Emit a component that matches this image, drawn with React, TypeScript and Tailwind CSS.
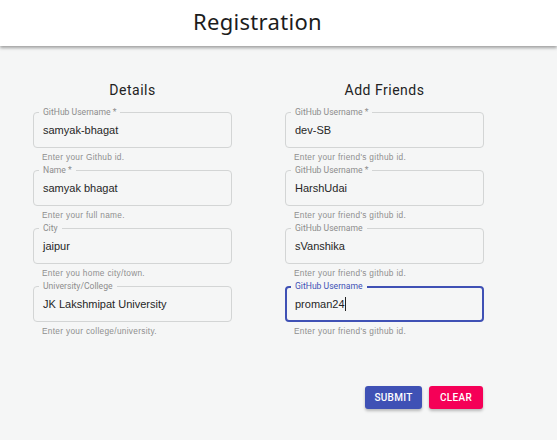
import React from "react";

type Field = {
  label: string;
  value: string;
  helper: string;
  focused?: boolean;
};

const details: Field[] = [
  { label: "GitHub Username *", value: "samyak-bhagat", helper: "Enter your Github id." },
  { label: "Name *", value: "samyak bhagat", helper: "Enter your full name." },
  { label: "City", value: "jaipur", helper: "Enter you home city/town." },
  { label: "University/College", value: "JK Lakshmipat University", helper: "Enter your college/university." },
];

const friends: Field[] = [
  { label: "GitHub Username *", value: "dev-SB", helper: "Enter your friend's github id." },
  { label: "GitHub Username *", value: "HarshUdai", helper: "Enter your friend's github id." },
  { label: "GitHub Username", value: "sVanshika", helper: "Enter your friend's github id." },
  { label: "GitHub Username", value: "proman24", helper: "Enter your friend's github id.", focused: true },
];

function OutlinedField({ f }: { f: Field }) {
  return (
    <div className="flex flex-col">
      <div
        className={
          "relative h-[36px] rounded-[4px] flex items-center " +
          (f.focused ? "border-2 border-[#3f51b5] pl-[8px]" : "border border-[#d3d5d5] pl-[9px]")
        }
      >
        {/* notched label sitting on the top border */}
        <span
          className={
            "absolute px-[4px] bg-[#f5f6f6] text-[8.6px] leading-[11px] " +
            (f.focused ? "text-[#3f51b5] left-[4px] top-[-7px]" : "text-[#8d8d8d] left-[5px] top-[-6px]")
          }
          style={{ fontFamily: "Roboto, sans-serif" }}
        >
          {f.label}
        </span>
        <span className="text-[11px] text-[#262626] leading-[16px]">
          {f.value}
          {f.focused && <span className="inline-block w-px h-[14px] bg-[#222] align-[-3px]" />}
        </span>
      </div>
      <p className="mt-[3px] mb-[7px] pl-[9px] text-[8.3px] leading-[12px] text-[#8f8f8f] tracking-[0.3px]">
        {f.helper}
      </p>
    </div>
  );
}

function Column({ title, fields }: { title: string; fields: Field[] }) {
  return (
    <div className="w-[199px] flex flex-col">
      <h2
        className="text-center text-[14px] leading-[20px] text-[#222] tracking-[0.5px] mb-[12px]"
        style={{ fontFamily: "Roboto, sans-serif" }}
      >
        {title}
      </h2>
      {fields.map((f, i) => (
        <OutlinedField key={i} f={f} />
      ))}
    </div>
  );
}

export default function App() {
  return (
    <div
      className="w-[557px] h-[440px] bg-[#f5f6f6] overflow-hidden"
      style={{ fontFamily: "'Liberation Sans', Arial, sans-serif" }}
    >
      <header className="h-[46px] bg-white shadow-[0_2px_3px_rgba(0,0,0,0.35)] flex items-center pl-[193px] relative z-10">
        <h1 className="text-[22px] leading-[28px] text-[#1c1c1c] tracking-[0.3px] mt-[-4px]" style={{ fontFamily: "'Noto Sans', sans-serif" }}>
          Registration
        </h1>
      </header>

      <div className="flex gap-[53px] pl-[33px] pt-[34px]">
        <Column title="Details" fields={details} />
        <Column title="Add Friends" fields={friends} />
      </div>

      <div className="flex justify-end gap-[7px] pr-[74px] mt-[42px]" style={{ fontFamily: "Roboto, sans-serif" }}>
        <button className="h-[23px] w-[57px] rounded-[3px] bg-[#3f51b5] text-white text-[10px] font-medium tracking-[0.3px] shadow-[0_2px_3px_rgba(0,0,0,0.25)]">
          SUBMIT
        </button>
        <button className="h-[23px] w-[54px] rounded-[3px] bg-[#f50057] text-white text-[10px] font-medium tracking-[0.3px] shadow-[0_2px_3px_rgba(0,0,0,0.25)]">
          CLEAR
        </button>
      </div>
    </div>
  );
}
